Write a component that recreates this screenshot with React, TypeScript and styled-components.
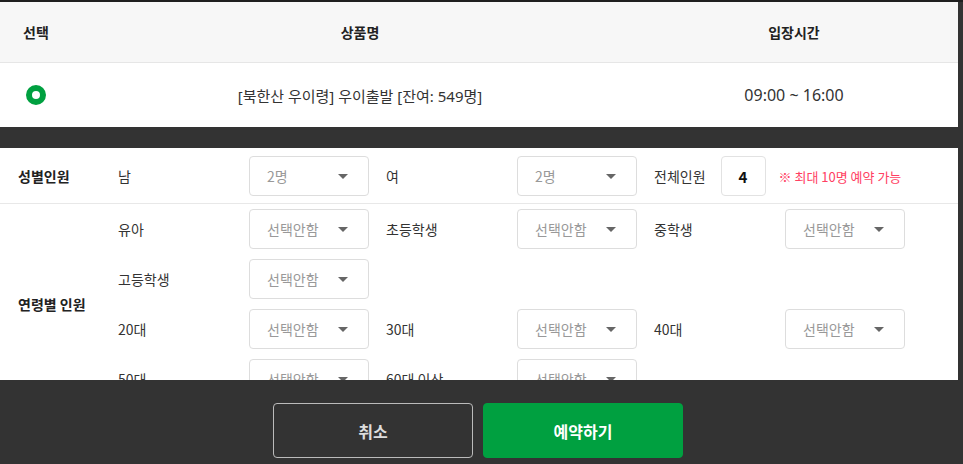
import React from 'react';
import styled, { createGlobalStyle } from 'styled-components';

const GlobalStyle = createGlobalStyle`
  html, body {
    margin: 0;
    padding: 0;
    background: #333333;
  }
  body {
    font-family: "Noto Sans CJK KR", "Noto Sans", sans-serif;
    color: #333333;
  }
  * { box-sizing: border-box; }
`;

const Page = styled.div`
  width: 963px;
  height: 464px;
  background: #333333;
  border-top: 2px solid #1f1f1f;
  overflow: hidden;
`;

const ScrollArea = styled.div`
  width: 958px;
  height: 378px;
  overflow-y: scroll;
  background: #ffffff;

  &::-webkit-scrollbar {
    width: 8px;
  }
  &::-webkit-scrollbar-track {
    background: #ededed;
  }
  &::-webkit-scrollbar-thumb {
    background: #444444;
    border-radius: 0 0 4px 4px;
  }
`;

const Table = styled.div`
  display: grid;
  grid-template-columns: 72px 576px 292px 1fr;
`;

const HeadCell = styled.div`
  height: 61px;
  background: #f7f7f7;
  border-bottom: 1px solid #e6e6e6;
  display: flex;
  align-items: center;
  justify-content: center;
  font-size: 14px;
  font-weight: 700;
  color: #222222;
`;

const BodyCell = styled.div<{ $size?: string; $font?: string }>`
  height: 64px;
  display: flex;
  align-items: center;
  justify-content: center;
  font-family: ${({ $font }) => $font || 'inherit'};
  font-size: ${({ $size }) => $size || '14px'};
  color: #333333;
`;

const Radio = styled.span`
  width: 20px;
  height: 20px;
  border-radius: 50%;
  border: 6.5px solid #00a040;
  background: #ffffff;
`;

const Band = styled.div`
  height: 21px;
  background: #333333;
`;

const Section = styled.div<{ $divider?: boolean; $pad: string }>`
  display: flex;
  align-items: center;
  padding: ${({ $pad }) => $pad};
  padding-left: 18px;
  border-bottom: ${({ $divider }) => ($divider ? '1px solid #e8e8e8' : 'none')};
`;

const SectionTitle = styled.div`
  width: 100px;
  flex-shrink: 0;
  font-size: 14px;
  font-weight: 700;
  color: #222222;
`;

const Rows = styled.div`
  display: flex;
  flex-direction: column;
  gap: 10px;
`;

const Row = styled.div`
  display: flex;
  align-items: center;
  gap: 17px;
`;

const Item = styled.div`
  display: flex;
  align-items: center;
`;

const Label = styled.span<{ $auto?: boolean }>`
  width: ${({ $auto }) => ($auto ? 'auto' : '131px')};
  margin-right: ${({ $auto }) => ($auto ? '15px' : '0')};
  font-size: 14px;
  color: #333333;
`;

const SelectBox = styled.div`
  width: 120px;
  height: 40px;
  border: 1px solid #dddddd;
  border-radius: 4px;
  display: flex;
  align-items: center;
  justify-content: space-between;
  padding: 0 20px 0 17px;
  font-size: 14px;
  color: #999999;
  background: #ffffff;
`;

const Caret = styled.span`
  width: 0;
  height: 0;
  border-left: 5px solid transparent;
  border-right: 5px solid transparent;
  border-top: 5px solid #666666;
`;

const TotalBox = styled.div`
  width: 45px;
  height: 40px;
  border: 1px solid #e2e2e2;
  border-radius: 4px;
  display: flex;
  align-items: center;
  justify-content: center;
  font-size: 15px;
  font-weight: 700;
  color: #111111;
`;

const Note = styled.span`
  margin-left: 13px;
  font-size: 13px;
  color: #ff4062;
`;

const Spacer = styled.div`
  height: 57px;
`;

const Footer = styled.div`
  width: 956px;
  display: flex;
  justify-content: center;
  gap: 10px;
  padding-top: 23px;
`;

const Button = styled.button<{ $primary?: boolean }>`
  width: 200px;
  height: 55px;
  border-radius: 4px;
  border: 1px solid ${({ $primary }) => ($primary ? '#00a040' : '#bbbbbb')};
  background: ${({ $primary }) => ($primary ? '#00a040' : 'transparent')};
  color: ${({ $primary }) => ($primary ? '#ffffff' : '#dddddd')};
  font-family: inherit;
  font-size: 16px;
  font-weight: 700;
  cursor: pointer;
`;

const Select = ({ value }: { value: string }) => (
  <SelectBox>
    <span>{value}</span>
    <Caret />
  </SelectBox>
);

const ageRows: string[][] = [
  ['유아', '초등학생', '중학생'],
  ['고등학생'],
  ['20대', '30대', '40대'],
  ['50대', '60대 이상'],
];

const latin = '"Noto Sans", "Noto Sans CJK KR", sans-serif';

const App: React.FC = () => (
  <>
    <GlobalStyle />
    <Page>
      <ScrollArea>
        <Table>
          <HeadCell>선택</HeadCell>
          <HeadCell>상품명</HeadCell>
          <HeadCell>입장시간</HeadCell>
          <HeadCell />
          <BodyCell>
            <Radio />
          </BodyCell>
          <BodyCell $size="15px" $font={latin}>
            [북한산 우이령] 우이출발 [잔여: 549명]
          </BodyCell>
          <BodyCell $size="16px" $font={latin}>
            09:00 ~ 16:00
          </BodyCell>
          <BodyCell />
        </Table>
        <Band />
        <Section $divider $pad="8px 0 7px">
          <SectionTitle>성별인원</SectionTitle>
          <Row>
            <Item>
              <Label>남</Label>
              <Select value="2명" />
            </Item>
            <Item>
              <Label>여</Label>
              <Select value="2명" />
            </Item>
            <Item>
              <Label $auto>전체인원</Label>
              <TotalBox>4</TotalBox>
              <Note>※ 최대 10명 예약 가능</Note>
            </Item>
          </Row>
        </Section>
        <Section $pad="5px 0 5px">
          <SectionTitle>연령별 인원</SectionTitle>
          <Rows>
            {ageRows.map((row, i) => (
              <Row key={i}>
                {row.map((label) => (
                  <Item key={label}>
                    <Label>{label}</Label>
                    <Select value="선택안함" />
                  </Item>
                ))}
              </Row>
            ))}
          </Rows>
        </Section>
        <Spacer />
      </ScrollArea>
      <Footer>
        <Button>취소</Button>
        <Button $primary>예약하기</Button>
      </Footer>
    </Page>
  </>
);

export default App;
